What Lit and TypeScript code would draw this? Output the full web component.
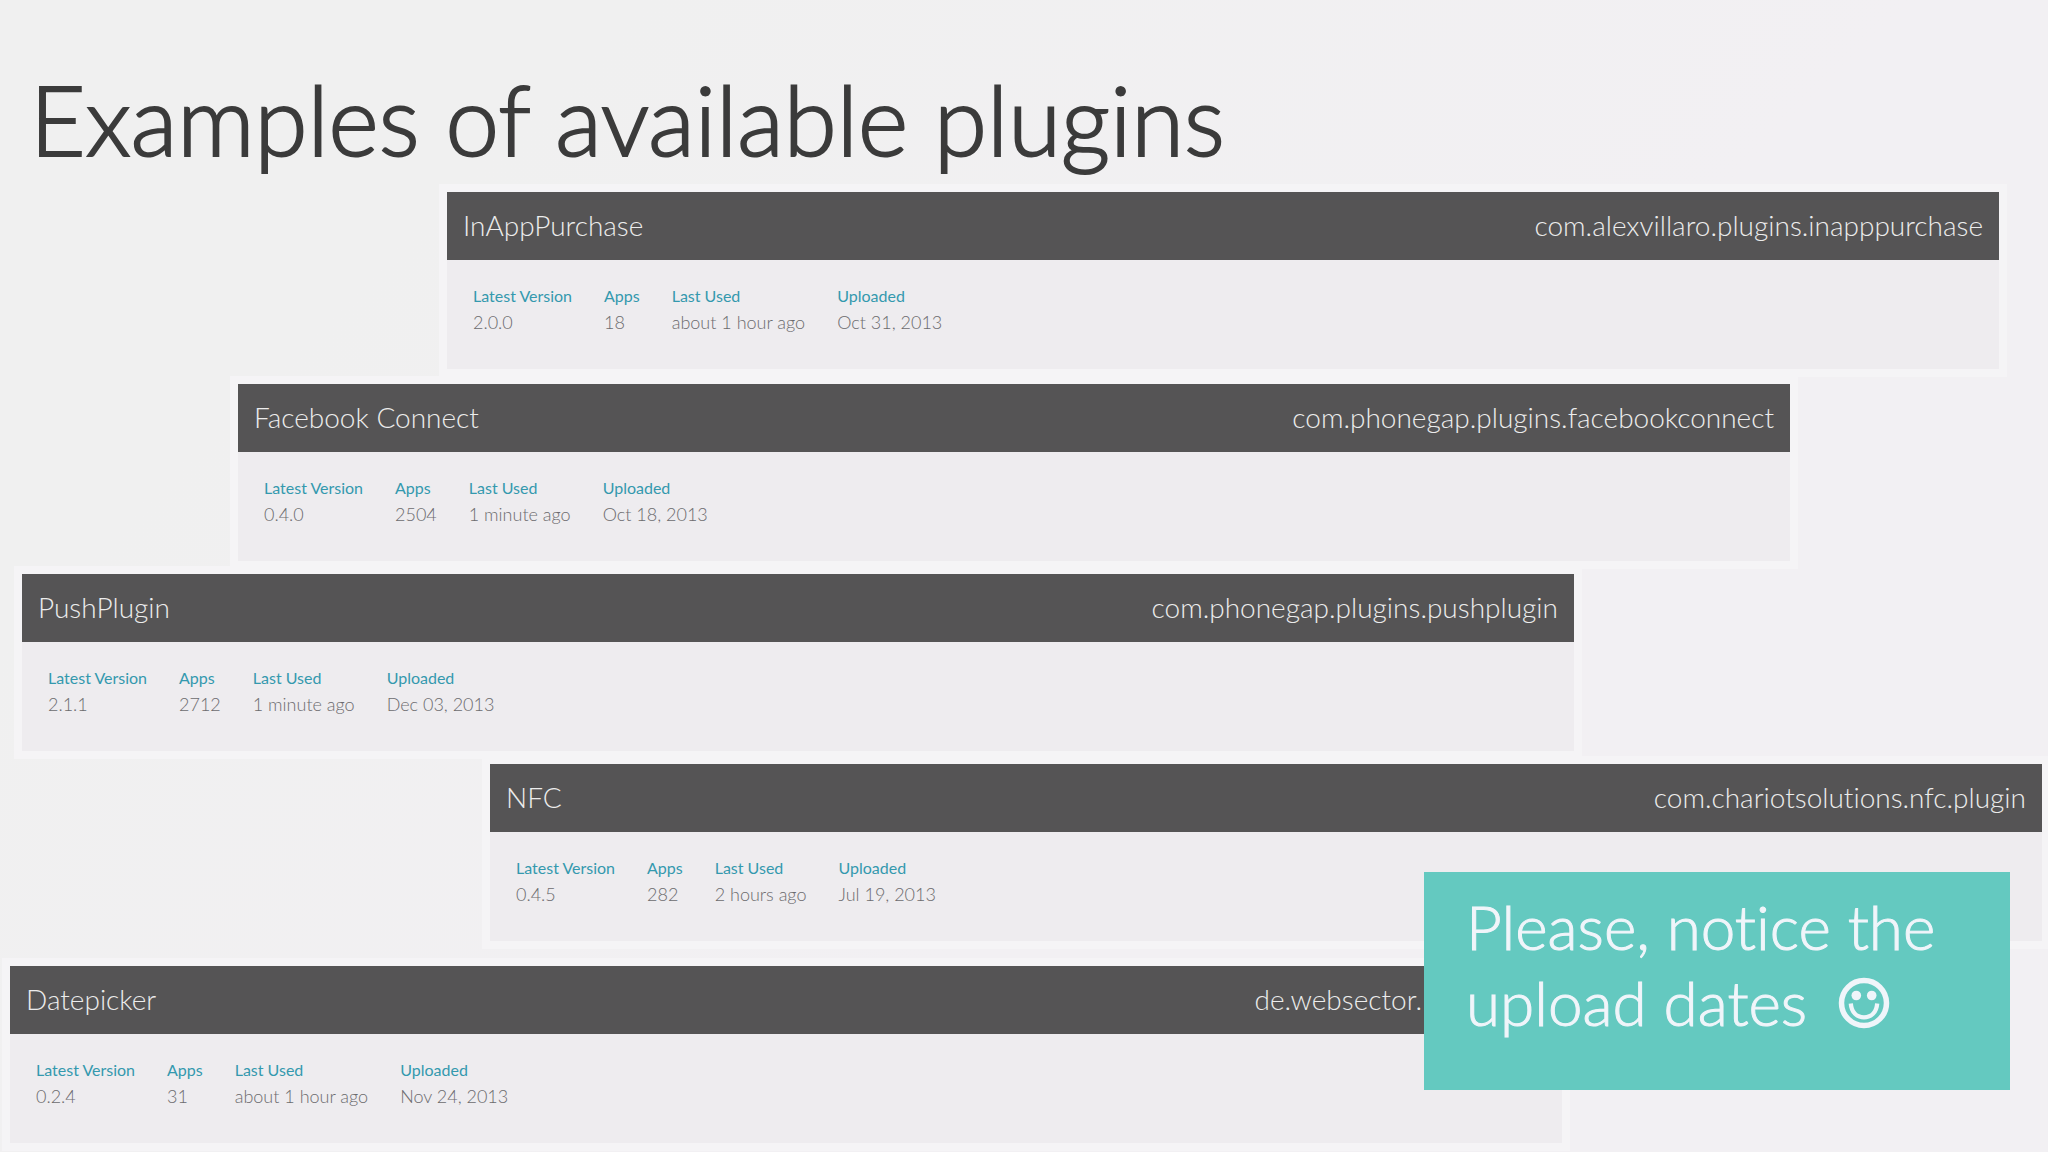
import { LitElement, html, css } from "lit";
import { customElement, property } from "lit/decorators.js";

interface Plugin {
  name: string;
  pkg: string;
  version: string;
  apps: number;
  lastUsed: string;
  uploaded: string;
}

const PLUGINS: Plugin[] = [
  { name: "InAppPurchase", pkg: "com.alexvillaro.plugins.inapppurchase", version: "2.0.0", apps: 18, lastUsed: "about 1 hour ago", uploaded: "Oct 31, 2013" },
  { name: "Facebook Connect", pkg: "com.phonegap.plugins.facebookconnect", version: "0.4.0", apps: 2504, lastUsed: "1 minute ago", uploaded: "Oct 18, 2013" },
  { name: "PushPlugin", pkg: "com.phonegap.plugins.pushplugin", version: "2.1.1", apps: 2712, lastUsed: "1 minute ago", uploaded: "Dec 03, 2013" },
  { name: "NFC", pkg: "com.chariotsolutions.nfc.plugin", version: "0.4.5", apps: 282, lastUsed: "2 hours ago", uploaded: "Jul 19, 2013" },
  { name: "Datepicker", pkg: "de.websector.", version: "0.2.4", apps: 31, lastUsed: "about 1 hour ago", uploaded: "Nov 24, 2013" },
];

@customElement("plugin-card")
export class PluginCard extends LitElement {
  @property({ attribute: false }) plugin!: Plugin;

  static styles = css`
    :host {
      display: block;
      box-sizing: border-box;
      background: #eeecef;
      box-shadow: 0 0 0 8px #f5f4f6;
    }
    .bar {
      display: flex;
      align-items: center;
      justify-content: space-between;
      gap: 32px;
      padding: 15px 16px 17px;
      background: #555455;
      color: #ececec;
      font-size: 28px;
      line-height: 36px;
      font-weight: 300;
    }
    /* The callout lies over the end of this bar, so its text stops short of it. */
    :host([covered]) .bar {
      padding-right: 140px;
    }
    .name {
      margin: 0;
      font: inherit;
    }
    .facts {
      display: flex;
      gap: 32px;
      margin: 0;
      padding: 23px 26px 34px;
      line-height: 26px;
    }
    dt {
      color: #3499ae;
      font-size: 16px;
    }
    dd {
      margin: 0;
      color: #6c6b6e;
      font-size: 18px;
      font-weight: 300;
    }
  `;

  render() {
    const p = this.plugin;
    const facts: [string, string | number][] = [
      ["Latest Version", p.version],
      ["Apps", p.apps],
      ["Last Used", p.lastUsed],
      ["Uploaded", p.uploaded],
    ];
    return html`
      <header class="bar">
        <h2 class="name">${p.name}</h2>
        <span>${p.pkg}</span>
      </header>
      <dl class="facts">
        ${facts.map(([label, value]) => html`<div><dt>${label}</dt><dd>${value}</dd></div>`)}
      </dl>
    `;
  }
}

@customElement("app-root")
export class AppRoot extends LitElement {
  static styles = css`
    :host {
      display: block;
      position: relative;
      box-sizing: border-box;
      min-height: 100vh;
      overflow: hidden;
      padding-bottom: 8px;
      background: linear-gradient(135deg, #f0f0f0 20%, #f2f0f3 60%);
      font-family: Lato, "Liberation Sans", sans-serif;
      font-variant-ligatures: none;
    }
    .title {
      margin: 0;
      padding: 61px 30px 15px;
      color: #3b3b3b;
      font-size: 96px;
      line-height: 116px;
      font-weight: 300;
      -webkit-text-stroke: 2px #3b3b3b;
    }
    .list {
      display: flex;
      flex-direction: column;
      gap: 13px;
    }
    .card {
      width: calc(100% - 496px);
    }
    .card-0 {
      align-self: flex-end;
      margin: 0 49px 2px 0;
    }
    .card-1 {
      align-self: flex-end;
      margin-right: 258px;
    }
    .card-2 {
      margin-left: 22px;
    }
    .card-3 {
      align-self: flex-end;
      margin-right: 6px;
    }
    .card-4 {
      margin: 12px 0 0 10px;
    }
    .callout {
      position: absolute;
      right: 38px;
      bottom: 62px;
      box-sizing: border-box;
      width: 586px;
      margin: 0;
      padding: 16px 42px 50px;
      background: #64c9c0;
      color: #f0f5fa;
      font-size: 62px;
      line-height: 76px;
      font-weight: 300;
      -webkit-text-stroke: 1px #f0f5fa;
    }
    .smile {
      width: 52px;
      height: 52px;
      margin-left: 14px;
      vertical-align: -3px;
    }
  `;

  render() {
    return html`
      <h1 class="title">Examples of available plugins</h1>
      <main class="list">
        ${PLUGINS.map(
          (p, i) => html`<plugin-card class="card card-${i}" ?covered=${i === PLUGINS.length - 1} .plugin=${p}></plugin-card>`
        )}
      </main>
      <p class="callout">
        Please, notice the upload dates
        <svg class="smile" viewBox="0 0 52 52" role="img" aria-label="smile">
          <circle cx="26" cy="26" r="22.500" fill="none" stroke="currentColor" stroke-width="5.500" />
          <circle cx="18.300" cy="18.500" r="4.800" fill="currentColor" stroke="none" />
          <circle cx="33.700" cy="18.500" r="4.800" fill="currentColor" stroke="none" />
          <path d="M12.800 26.500C13.500 35.500 19 40.300 26 40.300S38.500 35.500 39.200 26.500" fill="none" stroke="currentColor" stroke-width="4.300" />
        </svg>
      </p>
    `;
  }
}
